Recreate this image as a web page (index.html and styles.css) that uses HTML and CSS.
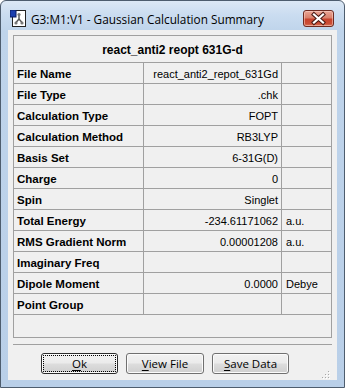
FILE: index.html
```html
<!DOCTYPE html>
<html>
<head>
<meta charset="utf-8">
<title>Gaussian Calculation Summary</title>
<link rel="stylesheet" href="styles.css">
</head>
<body>
<div class="window">
  <div class="titlebar">
    <svg class="app-icon" width="17" height="17" viewBox="0 0 17 17">
      <rect x="2.5" y="0.5" width="13" height="16" fill="#fff" stroke="#222"/>
      <rect x="0" y="0" width="6" height="7" fill="#1c3fb0" stroke="#0a1a60" stroke-width="1"/>
      <line x1="9" y1="5" x2="9" y2="9" stroke="#555" stroke-width="1.4"/>
      <line x1="9" y1="9" x2="6" y2="12.5" stroke="#555" stroke-width="1.4"/>
      <line x1="9" y1="9" x2="12" y2="12.5" stroke="#555" stroke-width="1.4"/>
      <circle cx="9" cy="4.5" r="1.6" fill="#777"/>
      <circle cx="6" cy="13" r="1.6" fill="#777"/>
      <circle cx="12" cy="13" r="1.6" fill="#777"/>
    </svg>
    <span class="title">G3:M1:V1 - Gaussian Calculation Summary</span>
    <div class="close">
      <svg width="31" height="17" viewBox="0 0 31 17">
        <path d="M11 4.5 L20 12.5 M20 4.5 L11 12.5" stroke="#4a1a14" stroke-width="4.2" stroke-linecap="square"/>
        <path d="M11 4.5 L20 12.5 M20 4.5 L11 12.5" stroke="#ffffff" stroke-width="2.2" stroke-linecap="square"/>
      </svg>
    </div>
  </div>
  <div class="client">
    <div class="panel">
      <div class="panel-head">react_anti2 reopt 631G-d</div>
      <div class="grid">
        <div class="lbl">File Name</div><div class="val">react_anti2_repot_631Gd</div><div class="unit"></div>
        <div class="lbl">File Type</div><div class="val">.chk</div><div class="unit"></div>
        <div class="lbl">Calculation Type</div><div class="val">FOPT</div><div class="unit"></div>
        <div class="lbl">Calculation Method</div><div class="val">RB3LYP</div><div class="unit"></div>
        <div class="lbl">Basis Set</div><div class="val">6-31G(D)</div><div class="unit"></div>
        <div class="lbl">Charge</div><div class="val">0</div><div class="unit"></div>
        <div class="lbl">Spin</div><div class="val">Singlet</div><div class="unit"></div>
        <div class="lbl">Total Energy</div><div class="val">-234.61171062</div><div class="unit">a.u.</div>
        <div class="lbl">RMS Gradient Norm</div><div class="val">0.00001208</div><div class="unit">a.u.</div>
        <div class="lbl">Imaginary Freq</div><div class="val"></div><div class="unit"></div>
        <div class="lbl">Dipole Moment</div><div class="val">0.0000</div><div class="unit">Debye</div>
        <div class="lbl">Point Group</div><div class="val"></div><div class="unit"></div>
      </div>
    </div>
    <div class="sep"></div>
    <div class="buttons">
      <button class="btn btn-default"><u>O</u>k</button>
      <button class="btn btn-wide"><u>V</u>iew File</button>
      <button class="btn"><u>S</u>ave Data</button>
      <svg class="grip" width="10" height="10" viewBox="0 0 10 10">
        <rect x="8" y="2" width="1" height="1" fill="#a8a8a8"/>
        <rect x="5" y="5" width="1" height="1" fill="#a8a8a8"/>
        <rect x="8" y="5" width="1" height="1" fill="#a8a8a8"/>
        <rect x="2" y="8" width="1" height="1" fill="#a8a8a8"/>
        <rect x="5" y="8" width="1" height="1" fill="#a8a8a8"/>
        <rect x="8" y="8" width="1" height="1" fill="#a8a8a8"/>
        <rect x="9" y="3" width="1" height="1" fill="#fff"/>
        <rect x="6" y="6" width="1" height="1" fill="#fff"/>
        <rect x="9" y="6" width="1" height="1" fill="#fff"/>
        <rect x="3" y="9" width="1" height="1" fill="#fff"/>
        <rect x="6" y="9" width="1" height="1" fill="#fff"/>
        <rect x="9" y="9" width="1" height="1" fill="#fff"/>
      </svg>
    </div>
  </div>
</div>
</body>
</html>
```
FILE: styles.css
```css
html, body {
  margin: 0;
  padding: 0;
  background: #ffffff;
}

body {
  width: 345px;
  height: 388px;
  overflow: hidden;
}

.window {
  box-sizing: border-box;
  width: 345px;
  height: 388px;
  border: 1px solid #4e5d6e;
  border-radius: 6px 6px 0 0;
  background: linear-gradient(to bottom, #dce8f5 0px, #cadcf0 14px, #bfd4eb 30px, #b9cfe8 100%);
  padding: 0 7px 7px 7px;
  display: flex;
  flex-direction: column;
}

.titlebar {
  height: 29px;
  flex: none;
  display: flex;
  align-items: flex-start;
}

.app-icon {
  flex: none;
  margin-top: 9px;
  margin-left: 2px;
}

.title {
  margin-top: 10px;
  margin-left: 4px;
  font-family: "Open Sans", "Noto Sans", sans-serif;
  font-size: 11.8px;
  line-height: 16px;
  color: #000;
  white-space: nowrap;
}

.close {
  flex: none;
  margin-left: auto;
  margin-right: 3px;
  margin-top: 9px;
  width: 31px;
  height: 17px;
  box-sizing: border-box;
  border: 1px solid #6e2a20;
  border-radius: 3px;
  background: linear-gradient(to bottom, #eaa595 0%, #d9806b 45%, #c8422c 55%, #cb4f37 85%, #d8785c 100%);
  box-shadow: inset 0 0 0 1px rgba(255, 220, 210, 0.5);
  overflow: hidden;
}

.close svg {
  display: block;
  margin: -1px 0 0 -1px;
}

.client {
  flex: 1;
  background: #f0f0f0;
  padding: 5px 5px 0 5px;
  display: flex;
  flex-direction: column;
}

.panel {
  box-sizing: border-box;
  height: 303px;
  border: 1px solid #a0a0a0;
  font-family: "Liberation Sans", Arial, sans-serif;
  font-size: 11px;
  color: #000;
}

.panel-head {
  box-sizing: content-box;
  height: 24px;
  padding-top: 2px;
  border-bottom: 1px solid #a0a0a0;
  display: flex;
  align-items: center;
  justify-content: center;
  font-weight: bold;
  font-size: 12px;
}

.grid {
  display: grid;
  grid-template-columns: 130px 138px 49px;
  grid-auto-rows: 21px;
}

.grid > div {
  box-sizing: border-box;
  border-bottom: 1px solid #a0a0a0;
  display: flex;
  align-items: center;
  padding-top: 2px;
  white-space: nowrap;
}

.lbl {
  border-right: 1px solid #a0a0a0;
  font-weight: bold;
  font-size: 11.5px;
  padding-left: 3px;
}

.val {
  border-right: 1px solid #a0a0a0;
  justify-content: flex-end;
  padding-right: 3px;
}

.unit {
  padding-left: 4px;
}

.sep {
  margin-top: 6px;
  height: 0;
  border-top: 1px solid #a0a0a0;
}

.buttons {
  margin-top: 8px;
  padding-left: 28px;
  display: flex;
  align-items: flex-start;
  gap: 8px;
}

.btn {
  box-sizing: border-box;
  width: 77px;
  height: 21px;
  padding: 0;
  border: 1px solid #707070;
  border-radius: 3px;
  background: linear-gradient(to bottom, #f2f2f2 0%, #ebebeb 48%, #dddddd 52%, #cfcfcf 100%);
  box-shadow: inset 0 0 0 1px #fbfbfb;
  font-family: "Open Sans", "Noto Sans", sans-serif;
  font-size: 11.5px;
  line-height: 17px;
  color: #000;
}

.btn u {
  text-decoration-thickness: 1px;
  text-underline-offset: 2px;
}

.btn-wide {
  width: 78px;
}

.btn-default {
  border-color: #2b2b2b;
  outline: 1px dotted #000;
  outline-offset: -3px;
}

.grip {
  flex: none;
  margin-left: auto;
  margin-right: 2px;
  margin-top: 16px;
}
```
